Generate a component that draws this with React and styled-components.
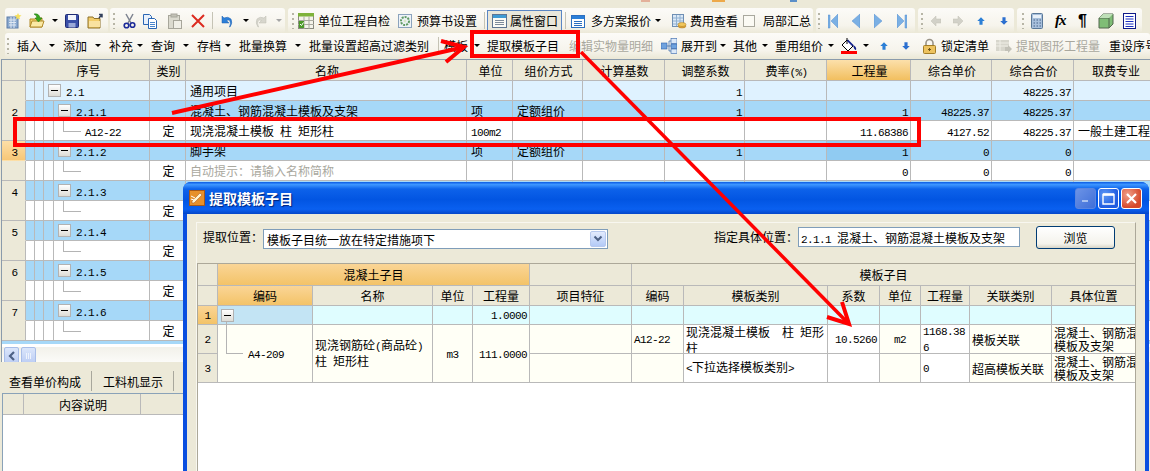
import React from 'react'
import styled, { createGlobalStyle } from 'styled-components'

const GlobalStyle = createGlobalStyle`
  html, body { margin: 0; padding: 0; background: #ece9d8; }
  body { font-family: "Noto Sans CJK SC", sans-serif; font-size: 12px; color: #000; }
`

const Page = styled.div`
  position: relative;
  width: 1150px;
  height: 471px;
  overflow: hidden;
  background: #ece9d8;
`

const Num = styled.span`
  font-family: "Liberation Mono", monospace;
  font-size: 11px;
  letter-spacing: -0.6px;
`

const TxtRun = styled.span`
  white-space: pre;
`

// latin runs get the mono face so they keep the half width of the cjk glyphs
const Txt = ({ children }) => (
  <TxtRun>
    {String(children)
      .split(/([\x20-\x7e]+)/)
      .filter(Boolean)
      .map((part, i) => (/^[\x20-\x7e]+$/.test(part) ? <Num key={i}>{part}</Num> : <span key={i}>{part}</span>))}
  </TxtRun>
)

/* ---------- toolbars ---------- */

const TopEdge = styled.div`
  display: flex;
  height: 3px;
`

const ClippedIcon = styled.i`
  width: ${(p) => p.$w}px;
  height: 2px;
  margin-left: ${(p) => p.$ml}px;
  background: ${(p) => p.$bg};
`

const ToolRow = styled.div`
  display: flex;
  height: ${(p) => p.$h}px;
  padding-top: ${(p) => p.$top}px;
  box-sizing: border-box;
`

const ToolGroup = styled.div`
  display: flex;
  flex: none;
  align-items: center;
  box-sizing: border-box;
  width: ${(p) => p.$w}px;
  margin-left: ${(p) => p.$ml}px;
  padding-left: ${(p) => p.$pl}px;
  border-radius: 3px;
  background: linear-gradient(#fcfbf8, #f6f4ec 70%, #ece9d8);
`

const Slot = styled.div`
  display: flex;
  flex: none;
  align-items: center;
  width: ${(p) => p.$w}px;
  white-space: nowrap;
  color: ${(p) => (p.$off ? '#a9a89e' : '#000')};
  font-size: 12px;
`

const Caret = styled.i`
  width: 0;
  height: 0;
  border-left: 3px solid transparent;
  border-right: 3px solid transparent;
  border-top: 3px solid ${(p) => (p.$off ? '#a5a5a5' : '#000')};
`

const Grip = styled.i`
  width: 2px;
  height: 16px;
  background: repeating-linear-gradient(#b7b5a6 0 2px, transparent 2px 5px);
`

const Sep = styled.i`
  width: 1px;
  height: 17px;
  background: #c5c3b5;
`

const Pressed = styled.div`
  display: flex;
  align-items: center;
  gap: 3px;
  box-sizing: border-box;
  width: 75px;
  height: 22px;
  padding-left: 3px;
  border: 1px solid #5a86c4;
  background: #e9e7db;
`

const Check = styled.i`
  width: 10px;
  height: 10px;
  border: 1px solid #a9a89e;
  background: #fbfaf4;
`

const PaintWrap = styled.div`
  display: flex;
  flex-direction: column;
  align-items: center;
  width: 16px;
`

const PaintBar = styled.i`
  width: 16px;
  height: 3px;
  margin-top: -1px;
  background: #f00;
`

const Svg = ({ children, w = 16, h = 16, vb = '0 0 16 16' }) => (
  <svg width={w} height={h} viewBox={vb} style={{ display: 'block', flex: 'none' }}>
    {children}
  </svg>
)

const upPath = 'M8 2 L14 8 L10.5 8 L10.5 14 L5.5 14 L5.5 8 L2 8 Z'
const downPath = 'M8 14 L14 8 L10.5 8 L10.5 2 L5.5 2 L5.5 8 L2 8 Z'

const icons = {
  new: (
    <Svg>
      <rect x="1" y="4" width="11" height="11" fill="#8aa9cf" stroke="#5c7da8" />
      <path d="M3 7h7M3 9.500h7M3 12h7M5 4v11M8 4v11" stroke="#dfe8f3" />
      <path d="M12 0l1 2 2.500 .5-2 1.500.5 2.500-2-1.200-2 1.200.5-2.500-2-1.500 2.500-.5z" fill="#f7e05c" />
    </Svg>
  ),
  open: (
    <Svg>
      <path d="M1 6h5l1-1h6v9H1z" fill="#f6d36c" stroke="#b08a2a" />
      <path d="M1 14l2-6h12l-2 6z" fill="#fbe9a4" stroke="#b08a2a" />
      <path d="M5 1q5-1 6 4h2l-3.500 4L6 5h2Q8 2.500 5 1z" fill="#37a51e" stroke="#1f7a10" strokeWidth=".5" />
    </Svg>
  ),
  save: (
    <Svg>
      <rect x="1.500" y="1.500" width="13" height="13" rx="1" fill="#3a4fa8" stroke="#1f2b74" />
      <rect x="4" y="2" width="8" height="5" fill="#f2f4fb" />
      <rect x="4.500" y="10" width="7" height="4.500" fill="#9aa8d8" />
    </Svg>
  ),
  folderUp: (
    <Svg>
      <path d="M1 4h5l1 1.500h6V15H1z" fill="#f3cd6a" stroke="#8d7128" />
      <path d="M2 8h11v6H2z" fill="#f9e2a0" />
      <path d="M12 5l3-3.500m-3 0h3v3" stroke="#33405c" strokeWidth="1.500" fill="none" />
    </Svg>
  ),
  cut: (
    <Svg>
      <path d="M4 1l5 9M11 1L6 10" stroke="#7d8390" strokeWidth="1.500" />
      <circle cx="4.500" cy="12.500" r="2.300" fill="none" stroke="#1c2a98" strokeWidth="1.600" />
      <circle cx="10.500" cy="12" r="2.300" fill="none" stroke="#1c2a98" strokeWidth="1.600" />
    </Svg>
  ),
  copy: (
    <Svg>
      <path d="M1.500 1.500h6l2 2v8h-8z" fill="#e8f0fb" stroke="#2a66b4" />
      <path d="M6.500 5.500h6l2 2v8h-8z" fill="#fff" stroke="#2a66b4" />
      <path d="M8 9.500h5M8 11.500h5M8 13.500h5" stroke="#4a86cc" />
    </Svg>
  ),
  paste: (
    <Svg>
      <rect x="1.500" y="2.500" width="11" height="13" fill="#dbdacf" stroke="#a7a69b" />
      <rect x="4" y="1" width="6" height="3" fill="#c2c1b6" stroke="#a7a69b" />
      <rect x="6.500" y="7.500" width="8" height="8" fill="#f0efe7" stroke="#a7a69b" />
    </Svg>
  ),
  del: (
    <Svg>
      <path d="M2 2l12 12M14 2L2 14" stroke="#dc2b20" strokeWidth="2" />
    </Svg>
  ),
  undo: (
    <Svg>
      <path d="M12 14q3-4 1-8-3-3-7-1L4 3v7h7L8.500 7.500q2.500-1 3.500.5 1 2-.5 6z" fill="#2c7fd8" stroke="#1c5fae" strokeWidth=".5" />
    </Svg>
  ),
  redo: (
    <Svg>
      <path d="M4 14q-3-4-1-8 3-3 7-1l2-2v7H5l2.500-2.500q-2.500-1-3.500.5-1 2 .5 6z" fill="#d7d6cd" stroke="#bdbcb2" strokeWidth=".5" />
    </Svg>
  ),
  check: (
    <Svg>
      <rect x=".500" y=".500" width="15" height="15" fill="#f4f3ea" stroke="#8a8a80" />
      <rect x="0" y="0" width="16" height="3.500" fill="#7fb33a" />
      <path d="M0 7.500h16M0 11.500h16M6 3.500V16M11 3.500V16" stroke="#a9a99f" />
      <rect x="1" y="8" width="5" height="7" fill="#4c9a2a" />
      <path d="M2 11l1.500 1.500L5.500 9.500" stroke="#fff" fill="none" />
    </Svg>
  ),
  gear: (
    <Svg>
      <rect x="1.500" y="1.500" width="13" height="13" fill="#eef3f8" stroke="#8ba3bd" />
      <circle cx="8" cy="8" r="4" fill="none" stroke="#5f9a62" strokeWidth="2" strokeDasharray="2 1" />
      <circle cx="8" cy="8" r="1.500" fill="#d9e8c8" />
    </Svg>
  ),
  props: (
    <Svg>
      <rect x="1.500" y="1.500" width="14" height="13" fill="#fbfbf6" stroke="#5e7592" />
      <rect x="2" y="2" width="13" height="3" fill="#3f9bd4" />
      <path d="M4 7.500h9M4 9.500h9M4 11.500h9" stroke="#7d8b9b" />
    </Svg>
  ),
  plan: (
    <Svg>
      <rect x="1.500" y="2.500" width="13" height="12" fill="#fff" stroke="#2c6fc0" />
      <rect x="2" y="3" width="12" height="3" fill="#2c7fd8" />
      <path d="M4 8.500h8M4 10.500h8M4 12.500h8" stroke="#2c6fc0" />
    </Svg>
  ),
  fee: (
    <Svg>
      <rect x="1.500" y="1.500" width="11" height="12" fill="#dce9f6" stroke="#6f8fb4" />
      <path d="M2 5h10M2 8h10M2 11h10M5.500 2v11M9 2v11" stroke="#8fb0d2" />
      <ellipse cx="11" cy="13" rx="4" ry="2" fill="#e1a83c" stroke="#a87820" strokeWidth=".5" />
      <ellipse cx="11" cy="11.500" rx="4" ry="2" fill="#f0c65c" stroke="#a87820" strokeWidth=".5" />
    </Svg>
  ),
  first: (
    <Svg w={10} vb="0 0 10 16">
      <path d="M0 2h2v13H0zM10 1v14L3 8z" fill="#7bb0e4" stroke="#5a93d2" strokeWidth=".5" />
    </Svg>
  ),
  prev: (
    <Svg w={8} vb="0 0 8 16">
      <path d="M8 1v14L0 8z" fill="#7bb0e4" stroke="#5a93d2" strokeWidth=".5" />
    </Svg>
  ),
  next: (
    <Svg w={8} vb="0 0 8 16">
      <path d="M0 1v14L8 8z" fill="#7bb0e4" stroke="#5a93d2" strokeWidth=".5" />
    </Svg>
  ),
  last: (
    <Svg w={10} vb="0 0 10 16">
      <path d="M8 2h2v13H8zM0 1v14L7 8z" fill="#7bb0e4" stroke="#5a93d2" strokeWidth=".5" />
    </Svg>
  ),
  left: (
    <Svg w={10} h={12} vb="0 0 10 12">
      <path d="M0 6l5-5v3h5v4H5v3z" fill="#d2d1c8" stroke="#c2c1b7" strokeWidth=".5" />
    </Svg>
  ),
  right: (
    <Svg w={10} h={12} vb="0 0 10 12">
      <path d="M10 6L5 1v3H0v4h5v3z" fill="#d2d1c8" stroke="#c2c1b7" strokeWidth=".5" />
    </Svg>
  ),
  up: (
    <Svg w={10} h={12}>
      <path d={upPath} fill="#2b7fd6" />
    </Svg>
  ),
  down: (
    <Svg w={10} h={12}>
      <path d={downPath} fill="#2b6fd0" />
    </Svg>
  ),
  tree: (
    <Svg>
      <rect x="0" y="5" width="6" height="6" fill="#6fa2de" stroke="#2f62a8" strokeWidth=".6" />
      <rect x="10" y="0.500" width="6" height="5" fill="#dbe8f8" stroke="#2f62a8" strokeWidth=".6" />
      <rect x="10" y="6" width="6" height="4.500" fill="#6fa2de" stroke="#2f62a8" strokeWidth=".6" />
      <rect x="10" y="11" width="6" height="4.500" fill="#dbe8f8" stroke="#2f62a8" strokeWidth=".6" />
      <path d="M6 8h4M8 3v10M8 3h2M8 13h2" stroke="#2f62a8" strokeWidth=".7" />
    </Svg>
  ),
  paint: (
    <Svg h={14} vb="0 0 16 14">
      <path d="M6 2l6 6-5 5-6-6z" fill="#fff" stroke="#000" />
      <path d="M6 0v6" stroke="#000" />
      <path d="M12 7q4 2 3 5-2 0-3-5z" fill="#12208c" />
      <path d="M7 1.500l5.500 5.500-1.500 1-5-5z" fill="#12208c" />
    </Svg>
  ),
  lock: (
    <Svg>
      <path d="M4 8V5a3.500 3.500 0 0 1 7 0v3" fill="none" stroke="#9a9488" strokeWidth="1.600" />
      <rect x="1.500" y="7.500" width="12" height="8" rx="1" fill="#edc35f" stroke="#a27d26" />
      <path d="M7.500 10v3M6 11.500h3" stroke="#6e5518" />
    </Svg>
  ),
  pick: (
    <Svg>
      <rect x="0" y="2" width="13" height="11" fill="#d7d6cc" />
      <path d="M0 5h13M0 8h13M4 2v11" stroke="#efeee6" />
      <path d="M9 9h3V7l4 4-4 4v-2H9z" fill="#c2c1b7" />
    </Svg>
  ),
  calc: (
    <Svg w={12} vb="0 0 12 16">
      <rect x=".500" y=".500" width="11" height="15" rx="1" fill="#a8c0dc" stroke="#5a7898" />
      <rect x="2" y="2" width="8" height="3" fill="#e8f0f8" />
      <path d="M2.500 7h1.500M5.500 7H7M8.500 7H10M2.500 10h1.500M5.500 10H7M8.500 10H10M2.500 13h1.500M5.500 13H7M8.500 13H10" stroke="#47628a" />
    </Svg>
  ),
  cube: (
    <Svg>
      <path d="M1 5l4-4h10v10l-4 4H1z" fill="#7fbd76" stroke="#52664e" />
      <path d="M1 5h10v10" fill="none" stroke="#52664e" />
      <path d="M1 5l4-4h10l-4 4z" fill="#bfe0b8" />
    </Svg>
  ),
  list: (
    <Svg w={13} vb="0 0 13 16">
      <rect x=".500" y=".500" width="12" height="15" fill="#fff" stroke="#101a88" />
      <path d="M2.500 3.500h8M2.500 6h8M2.500 8.500h8M2.500 11h8M2.500 13.500h8" stroke="#1c30c0" />
    </Svg>
  ),
}

const Fx = styled.span`
  font-family: "Liberation Serif", serif;
  font-style: italic;
  font-weight: 700;
  font-size: 15px;
  letter-spacing: -1px;
`

const Pilcrow = styled.span`
  font-family: "Liberation Sans", sans-serif;
  font-weight: 700;
  font-size: 16px;
`

const renderItem = (it) => {
  if (it.icon) return icons[it.icon]
  if (it.text) return <Txt>{it.text}</Txt>
  if (it.caret) return <Caret $off={it.off} />
  if (it.grip) return <Grip />
  if (it.sep) return <Sep />
  if (it.check) return <Check />
  if (it.fx) return <Fx>fx</Fx>
  if (it.pil) return <Pilcrow>¶</Pilcrow>
  if (it.paint)
    return (
      <PaintWrap>
        {icons.paint}
        <PaintBar />
      </PaintWrap>
    )
  if (it.pressed)
    return (
      <Pressed>
        {icons.props}
        <Txt>{it.pressed}</Txt>
      </Pressed>
    )
  return null
}

const Group = ({ from, to, ml, items }) => (
  <ToolGroup $w={to - from} $ml={ml} $pl={items[0].x - from}>
    {items.map((it, i) => (
      <Slot key={i} $off={it.off} $w={(items[i + 1] ? items[i + 1].x : to) - it.x}>
        {renderItem(it)}
      </Slot>
    ))}
  </ToolGroup>
)

const bar1 = [
  {
    from: 5, to: 108, ml: 5,
    items: [{ x: 6, icon: 'new' }, { x: 29, icon: 'open' }, { x: 52, caret: 1 }, { x: 64, icon: 'save' }, { x: 87, icon: 'folderUp' }],
  },
  {
    from: 110, to: 285, ml: 2,
    items: [
      { x: 113, grip: 1 }, { x: 122, icon: 'cut' }, { x: 142, icon: 'copy' }, { x: 167, icon: 'paste' }, { x: 190, icon: 'del' },
      { x: 212, sep: 1 }, { x: 218, icon: 'undo' }, { x: 243, caret: 1 }, { x: 254, icon: 'redo' }, { x: 276, caret: 1, off: 1 },
    ],
  },
  {
    from: 288, to: 813, ml: 3,
    items: [
      { x: 292, grip: 1 }, { x: 298, icon: 'check' }, { x: 318, text: '单位工程自检' }, { x: 397, icon: 'gear' }, { x: 417, text: '预算书设置' },
      { x: 484, sep: 1 }, { x: 487, pressed: '属性窗口' }, { x: 565, sep: 1 }, { x: 570, icon: 'plan' }, { x: 591, text: '多方案报价' },
      { x: 655, caret: 1 }, { x: 671, icon: 'fee' }, { x: 690, text: '费用查看' }, { x: 743, check: 1 }, { x: 763, text: '局部汇总' },
    ],
  },
  {
    from: 816, to: 915, ml: 3,
    items: [{ x: 818, grip: 1 }, { x: 828, icon: 'first' }, { x: 852, icon: 'prev' }, { x: 874, icon: 'next' }, { x: 897, icon: 'last' }],
  },
  {
    from: 918, to: 1014, ml: 3,
    items: [{ x: 921, grip: 1 }, { x: 931, icon: 'left' }, { x: 953, icon: 'right' }, { x: 976, icon: 'up' }, { x: 999, icon: 'down' }],
  },
  {
    from: 1017, to: 1142, ml: 3,
    items: [{ x: 1022, grip: 1 }, { x: 1031, icon: 'calc' }, { x: 1055, fx: 1 }, { x: 1078, pil: 1 }, { x: 1098, icon: 'cube' }, { x: 1123, icon: 'list' }],
  },
]

const bar2 = [
  {
    from: 5, to: 1150, ml: 5,
    items: [
      { x: 7, grip: 1 }, { x: 17, text: '插入' }, { x: 49, caret: 1 }, { x: 63, text: '添加' }, { x: 95, caret: 1 }, { x: 109, text: '补充' },
      { x: 137, caret: 1 }, { x: 151, text: '查询' }, { x: 183, caret: 1 }, { x: 197, text: '存档' }, { x: 225, caret: 1 },
      { x: 239, text: '批量换算' }, { x: 295, caret: 1 }, { x: 309, text: '批量设置超高过滤类别' }, { x: 438, sep: 1 },
      { x: 444, text: '模板' }, { x: 474, caret: 1 }, { x: 487, text: '提取模板子目' }, { x: 569, text: '编辑实物量明细', off: 1 },
      { x: 661, icon: 'tree' }, { x: 681, text: '展开到' }, { x: 720, caret: 1 }, { x: 733, text: '其他' }, { x: 762, caret: 1 },
      { x: 775, text: '重用组价' }, { x: 828, caret: 1 }, { x: 841, paint: 1 }, { x: 863, caret: 1 }, { x: 879, icon: 'up' },
      { x: 901, icon: 'down' }, { x: 922, icon: 'lock' }, { x: 941, text: '锁定清单' }, { x: 996, icon: 'pick' },
      { x: 1016, text: '提取图形工程量', off: 1 }, { x: 1109, text: '重设序号' },
    ],
  },
]

/* ---------- main grid ---------- */

const COLS = '24px 9px 9px 10px 96px 36px 281px 46px 70px 82px 80px 82px 84px 81px 82px 83px'
const ROW_BG = { group: '#dff2ff', parent: '#a6d8f8', child: '#fff' }

const Grid = styled.div`
  width: 1160px;
  height: 302px;
  margin: 1px 0 0 1px;
  border-left: 1px solid #8a9bab;
  border-top: 1px solid #8a9bab;
  overflow: hidden;
  background: #fff;
`

const Row = styled.div`
  display: grid;
  grid-template-columns: ${COLS};
  height: ${(p) => p.$h || 20}px;
`

const Cell = styled.div`
  display: flex;
  align-items: center;
  justify-content: ${(p) => p.$align || 'flex-start'};
  box-sizing: border-box;
  min-width: 0;
  padding: 0 2px 0 4px;
  grid-column: ${(p) => p.$span || 'auto'};
  white-space: nowrap;
  background: ${(p) => p.$bg || '#fff'};
  color: ${(p) => p.$color || '#000'};
  border-right: 1px solid #b9b9b9;
  border-bottom: 1px solid ${(p) => (p.$noLine ? 'transparent' : '#b9b9b9')};
`

const HeadCell = styled(Cell)`
  justify-content: center;
  background: ${(p) => (p.$hot ? 'linear-gradient(#fce0ab, #f2bf5f)' : '#ece9d8')};
`

const NumHead = styled(Cell)`
  justify-content: center;
  background: ${(p) => (p.$hot ? 'linear-gradient(#fddfa8, #f7c777)' : '#ece9d8')};
`

const TreeCell = styled(Cell)`
  gap: 5px;
  padding: 0 0 0 4px;
`

const ChildCell = styled(Cell)`
  align-items: flex-start;
  padding: 0 0 0 9px;
`

const Connector = styled.i`
  flex: none;
  width: 17px;
  height: 10px;
  margin-right: 4px;
  border-left: 1px solid #b4b4b4;
  border-bottom: 1px solid #b4b4b4;
`

const ChildCode = styled.span`
  margin-top: 1px;
`

const Box = styled.i`
  position: relative;
  flex: none;
  box-sizing: border-box;
  width: 13px;
  height: 13px;
  border: 1px solid #b2b2b2;
  background: linear-gradient(#fff, #dddcd6);
  &::after {
    content: '';
    position: absolute;
    left: 2px;
    top: 5px;
    width: 7px;
    height: 1px;
    background: #000;
  }
`

const rows = [
  { kind: 'group', code: '2.1', name: '通用项目', adj: '1', total: '48225.37' },
  { kind: 'parent', num: '2', code: '2.1.1', name: '混凝土、钢筋混凝土模板及支架', unit: '项', way: '定额组价', adj: '1', qty: '1', price: '48225.37', total: '48225.37' },
  { kind: 'child', code: 'A12-22', type: '定', name: '现浇混凝土模板 柱 矩形柱', unit: '100m2', qty: '11.68386', price: '4127.52', total: '48225.37', major: '一般土建工程' },
  { kind: 'parent', num: '3', hot: true, code: '2.1.2', name: '脚手架', unit: '项', way: '定额组价', adj: '1', qty: '1', price: '0', total: '0', qtyBg: '#90cbf2' },
  { kind: 'child', type: '定', name: '自动提示：请输入名称简称', hint: true, qty: '0', price: '0', total: '0' },
  { kind: 'parent', num: '4', code: '2.1.3' },
  { kind: 'child', type: '定' },
  { kind: 'parent', num: '5', code: '2.1.4' },
  { kind: 'child', type: '定' },
  { kind: 'parent', num: '6', code: '2.1.5' },
  { kind: 'child', type: '定' },
  { kind: 'parent', num: '7', code: '2.1.6' },
  { kind: 'child', type: '定' },
]

const headers = ['类别', '名称', '单位', '组价方式', '计算基数', '调整系数', '费率(%)', '工程量', '综合单价', '综合合价', '取费专业']

const GridRow = ({ r }) => {
  const bg = ROW_BG[r.kind]
  const end = 'flex-end'
  return (
    <Row>
      <NumHead $hot={r.hot} $noLine={r.kind === 'parent' || r.kind === 'group'}>
        {r.num && <Txt>{r.num}</Txt>}
      </NumHead>
      <Cell $bg={bg} />
      <Cell $bg={bg} />
      {r.kind === 'group' ? (
        <TreeCell $bg={bg} $span="span 2">
          <Box />
          <Txt>{r.code}</Txt>
        </TreeCell>
      ) : (
        <>
          <Cell $bg={bg} />
          {r.kind === 'parent' ? (
            <TreeCell $bg={bg}>
              <Box />
              <Txt>{r.code}</Txt>
            </TreeCell>
          ) : (
            <ChildCell $bg={bg}>
              <Connector />
              {r.code && <ChildCode><Txt>{r.code}</Txt></ChildCode>}
            </ChildCell>
          )}
        </>
      )}
      <Cell $bg={bg} $align="center">{r.type}</Cell>
      <Cell $bg={bg} $color={r.hint ? '#a9a89e' : undefined}>{r.name && <Txt>{r.name}</Txt>}</Cell>
      <Cell $bg={bg}>{r.unit && <Txt>{r.unit}</Txt>}</Cell>
      <Cell $bg={bg}>{r.way}</Cell>
      <Cell $bg={bg} />
      <Cell $bg={bg} $align={end}>{r.adj && <Txt>{r.adj}</Txt>}</Cell>
      <Cell $bg={bg} />
      <Cell $bg={r.qtyBg || bg} $align={end}>{r.qty && <Txt>{r.qty}</Txt>}</Cell>
      <Cell $bg={bg} $align={end}>{r.price && <Txt>{r.price}</Txt>}</Cell>
      <Cell $bg={bg} $align={end}>{r.total && <Txt>{r.total}</Txt>}</Cell>
      <Cell $bg={bg}>{r.major}</Cell>
    </Row>
  )
}

const Scrollbar = styled.div`
  display: flex;
  gap: 2px;
  height: 18px;
  margin-top: 3px;
  padding-left: 2px;
  background: linear-gradient(#f2f1ea, #fdfdfb);
`

const ScrollBtn = styled.div`
  display: flex;
  align-items: center;
  justify-content: center;
  box-sizing: border-box;
  width: 15px;
  height: 17px;
  border: 1px solid #a8bde8;
  border-radius: 2px;
  background: linear-gradient(#dbe6fb, #bccdf4);
`

const ParentSliver = styled.div`
  height: 3px;
  background: #a6d8f8;
`

const Tabs = styled.div`
  display: flex;
  align-items: center;
  height: 24px;
  margin-top: 7px;
  padding-left: 9px;
`

const Tab = styled.div`
  display: flex;
  align-items: center;
  height: 20px;
  padding-right: 10px;
  margin-right: 11px;
  border-right: 1px solid #a8a79c;
  white-space: nowrap;
`

const Lower = styled.div`
  width: 190px;
  height: 90px;
  margin: 0 0 0 2px;
  border-left: 1px solid #8aa2b8;
  border-top: 1px solid #8aa2b8;
  background: #fff;
`

const LowerHead = styled.div`
  display: grid;
  grid-template-columns: 21px 117px 1fr;
  height: 21px;
`

/* ---------- dialog ---------- */

const Dialog = styled.div`
  position: absolute;
  left: 183px;
  top: 182px;
  width: 966px;
  height: 320px;
  border-radius: 8px 8px 0 0;
  background: #0a4fe0;
  box-sizing: border-box;
  padding: 0 4px;
`

const TitleBar = styled.div`
  display: flex;
  align-items: center;
  height: 32px;
  margin: 0 -4px;
  padding: 0 7px 0 6px;
  border-radius: 8px 8px 0 0;
  background: linear-gradient(#0a5ae4 0, #3d96ff 8%, #0d62ea 22%, #0255e2 55%, #0a60f0 85%, #0345c8 100%);
`

const TitleIcon = styled.div`
  flex: none;
  width: 16px;
  height: 16px;
  margin-right: 4px;
`

const TitleText = styled.div`
  flex: 1;
  color: #fff;
  font-weight: 700;
  font-size: 14px;
  text-shadow: 1px 1px 1px #00237a;
`

const WinBtn = styled.div`
  display: flex;
  align-items: center;
  justify-content: center;
  box-sizing: border-box;
  width: 21px;
  height: 21px;
  margin-left: ${(p) => p.$ml || 0}px;
  border: 1px solid ${(p) => (p.$off ? '#5b86e0' : '#fff')};
  border-radius: 3px;
  background: ${(p) =>
    p.$close
      ? 'radial-gradient(circle at 30% 30%, #f0a08a, #d5482a 70%)'
      : p.$off
      ? 'linear-gradient(135deg, #6c93e6, #3f6fd8)'
      : 'radial-gradient(circle at 30% 30%, #5d98f5, #1f5be0 70%)'};
`

const DialogBody = styled.div`
  height: 100%;
  box-sizing: border-box;
  padding: 8px 9px;
  background: #ece9d8;
`

const Panel = styled.div`
  height: 300px;
  border: 1px solid #f8f7f0;
  border-right-color: #aca899;
`

const FormRow = styled.div`
  display: flex;
  align-items: center;
  box-sizing: border-box;
  height: 40px;
  padding: 0 0 8px 6px;
`

const Label = styled.span`
  white-space: nowrap;
  margin-left: ${(p) => p.$ml || 0}px;
  margin-bottom: 6px;
`

const Combo = styled.div`
  display: flex;
  align-items: center;
  justify-content: space-between;
  box-sizing: border-box;
  width: 345px;
  height: 20px;
  padding: 0 1px 0 3px;
  border: 1px solid #7f9db9;
  background: #fff;
`

const ComboBtn = styled.div`
  display: flex;
  align-items: center;
  justify-content: center;
  box-sizing: border-box;
  width: 16px;
  height: 16px;
  border: 1px solid #b7c9ee;
  border-radius: 2px;
  background: linear-gradient(#e3ebfd, #b3caf7);
`

const Input = styled.div`
  box-sizing: border-box;
  width: 222px;
  height: 20px;
  margin: 0 0 4px 0;
  padding: 2px 2px;
  line-height: 15px;
  border: 1px solid #7f9db9;
  background: #fff;
  white-space: nowrap;
`

const Button = styled.div`
  display: flex;
  align-items: center;
  justify-content: center;
  box-sizing: border-box;
  width: 79px;
  height: 23px;
  margin: 0 0 4px 16px;
  border: 1px solid #003c74;
  border-radius: 3px;
  background: linear-gradient(#fff, #f4f3ec 80%, #d8d5c6);
`

const SubGrid = styled.div`
  display: grid;
  grid-template-columns: 20px 95px 120px 40px 57px 102px 52px 144px 52px 41px 49px 82px 84px;
  grid-template-rows: 22px 20px 19px 29px 29px;
  align-content: start;
  height: 240px;
  border-top: 1px solid #aca899;
  border-left: 1px solid #aca899;
  background: #fff;
  overflow: hidden;
`

const SubCell = styled.div`
  display: flex;
  align-items: center;
  justify-content: ${(p) => p.$align || 'flex-start'};
  box-sizing: border-box;
  min-width: 0;
  padding: 0 2px;
  grid-column: ${(p) => p.$col || 'auto'};
  grid-row: ${(p) => p.$row || 'auto'};
  line-height: 13px;
  white-space: nowrap;
  overflow: hidden;
  background: ${(p) => p.$bg || '#fffff6'};
  border-right: 1px solid #b9b9b9;
  border-bottom: 1px solid #b9b9b9;
`

const HOT = 'linear-gradient(#fad596, #f3c368)'
const BEIGE = '#ece9d8'
const AQUA = '#dffdff'

const SubRoot = styled(SubCell)`
  position: relative;
  padding-left: 3px;
  overflow: visible;
`

const SubStem = styled.i`
  position: absolute;
  left: 8px;
  top: -3px;
  width: 16px;
  height: 31px;
  border-left: 1px solid #b4b4b4;
  border-bottom: 1px solid #b4b4b4;
`

const SubCode = styled.span`
  padding-left: 27px;
`

const subHeads = [
  ['编码', HOT], ['名称'], ['单位'], ['工程量'], ['项目特征'], ['编码'], ['模板类别'], ['系数'], ['单位'], ['工程量'], ['关联类别'], ['具体位置'],
]

const Annot = styled.svg`
  position: absolute;
  left: 0;
  top: 0;
  pointer-events: none;
`

const TemplateDialog = () => (
  <Dialog>
    <TitleBar>
      <TitleIcon>
        <Svg>
          <rect x=".500" y=".500" width="15" height="15" fill="#e7902a" stroke="#a5581a" />
          <path d="M3 11l8-8 2 2-8 8H3z" fill="#fff2cc" stroke="#b3602a" strokeWidth=".6" />
          <path d="M2 6l4 2M2 9l3 1" stroke="#fff" />
        </Svg>
      </TitleIcon>
      <TitleText>提取模板子目</TitleText>
      <WinBtn $off>
        <Svg w={10} h={10} vb="0 0 10 10"><rect x="1" y="7" width="6" height="2" fill="#a9c2f0" /></Svg>
      </WinBtn>
      <WinBtn $ml={2}>
        <Svg w={13} h={13} vb="0 0 13 13"><path d="M1 2.500h11v9.500H1z" fill="none" stroke="#fff" strokeWidth="1.400" /><path d="M1 2.500h11" stroke="#fff" strokeWidth="2.500" /></Svg>
      </WinBtn>
      <WinBtn $ml={2} $close>
        <Svg w={13} h={13} vb="0 0 13 13"><path d="M2 2l9 9M11 2l-9 9" stroke="#fff" strokeWidth="2.200" /></Svg>
      </WinBtn>
    </TitleBar>
    <DialogBody>
      <Panel>
        <FormRow>
          <Label>提取位置：</Label>
          <Combo>
            <Txt>模板子目统一放在特定措施项下</Txt>
            <ComboBtn>
              <Svg w={10} h={8} vb="0 0 10 8"><path d="M1.500 1.500L5 5l3.500-3.500" fill="none" stroke="#4d6185" strokeWidth="2" /></Svg>
            </ComboBtn>
          </Combo>
          <Label $ml={106}>指定具体位置：</Label>
          <Input><Txt>2.1.1 混凝土、钢筋混凝土模板及支架</Txt></Input>
          <Button>浏览</Button>
        </FormRow>
        <SubGrid>
          <SubCell $bg={BEIGE} />
          <SubCell $bg={HOT} $col="span 4" $align="center">混凝土子目</SubCell>
          <SubCell $bg={BEIGE} />
          <SubCell $bg={BEIGE} $col="span 7" $align="center">模板子目</SubCell>

          <SubCell $bg={BEIGE} />
          {subHeads.map(([t, bg], i) => (
            <SubCell key={i} $bg={bg || BEIGE} $align="center">{t}</SubCell>
          ))}

          <SubCell $bg={HOT} $align="center"><Txt>1</Txt></SubCell>
          <SubRoot $bg="#c3e4f4"><Box /></SubRoot>
          <SubCell $bg={AQUA} />
          <SubCell $bg={AQUA} />
          <SubCell $bg={AQUA} $align="flex-end"><Txt>1.0000</Txt></SubCell>
          {Array.from({ length: 8 }, (_, i) => <SubCell key={i} $bg={AQUA} />)}

          <SubCell $bg={BEIGE} $align="center"><Txt>2</Txt></SubCell>
          <SubRoot $row="span 2">
            <SubStem />
            <SubCode><Txt>A4-209</Txt></SubCode>
          </SubRoot>
          <SubCell $row="span 2"><div><Txt>现浇钢筋砼(商品砼)</Txt><br /><Txt>柱 矩形柱</Txt></div></SubCell>
          <SubCell $row="span 2" $align="center"><Txt>m3</Txt></SubCell>
          <SubCell $row="span 2" $align="flex-end"><Txt>111.0000</Txt></SubCell>
          <SubCell />
          <SubCell><Txt>A12-22</Txt></SubCell>
          <SubCell $bg="#fff"><div><Txt>现浇混凝土模板  柱 矩形</Txt><br /><Txt>柱</Txt></div></SubCell>
          <SubCell $bg="#fff" $align="flex-end"><Txt>10.5260</Txt></SubCell>
          <SubCell $align="center"><Txt>m2</Txt></SubCell>
          <SubCell $bg="#fff"><div><Txt>1168.38</Txt><br /><Txt>6</Txt></div></SubCell>
          <SubCell>模板关联</SubCell>
          <SubCell><div>混凝土、钢筋混<br />模板及支架</div></SubCell>

          <SubCell $bg={BEIGE} $align="center"><Txt>3</Txt></SubCell>
          <SubCell />
          <SubCell />
          <SubCell $bg="#fff"><Txt>{'<下拉选择模板类别>'}</Txt></SubCell>
          <SubCell $bg="#fff" />
          <SubCell />
          <SubCell $bg="#fff"><Txt>0</Txt></SubCell>
          <SubCell>超高模板关联</SubCell>
          <SubCell><div>混凝土、钢筋混<br />模板及支架</div></SubCell>
        </SubGrid>
      </Panel>
    </DialogBody>
  </Dialog>
)

export default function App() {
  return (
    <Page>
      <GlobalStyle />
      <TopEdge>
        <ClippedIcon $ml={641} $w={9} $bg="#e3b09a" />
        <ClippedIcon $ml={62} $w={13} $bg="#eda94a" />
        <ClippedIcon $ml={65} $w={7} $bg="#5b8fc8" />
      </TopEdge>
      <ToolRow $h={30} $top={5}>
        {bar1.map((g, i) => <Group key={i} {...g} />)}
      </ToolRow>
      <ToolRow $h={25} $top={0}>
        {bar2.map((g, i) => <Group key={i} {...g} />)}
      </ToolRow>
      <Grid>
        <Row $h={21}>
          <HeadCell />
          <HeadCell $span="span 4">序号</HeadCell>
          {headers.map((h) => (
            <HeadCell key={h} $hot={h === '工程量'}><Txt>{h}</Txt></HeadCell>
          ))}
        </Row>
        {rows.map((r, i) => <GridRow key={i} r={r} />)}
        <ParentSliver />
        <Scrollbar>
          <ScrollBtn>
            <Svg w={8} h={10} vb="0 0 8 10"><path d="M6 1L2 5l4 4" fill="none" stroke="#4d6185" strokeWidth="2.200" /></Svg>
          </ScrollBtn>
          <ScrollBtn>
            <Svg w={8} h={8} vb="0 0 8 8"><path d="M1.500 1v6M3.500 1v6M5.500 1v6" stroke="#eef3fd" /></Svg>
          </ScrollBtn>
        </Scrollbar>
      </Grid>
      <Tabs>
        <Tab>查看单价构成</Tab>
        <Tab>工料机显示</Tab>
      </Tabs>
      <Lower>
        <LowerHead>
          <HeadCell />
          <HeadCell>内容说明</HeadCell>
          <HeadCell />
        </LowerHead>
      </Lower>
      <TemplateDialog />
      <Annot width="1150" height="471" viewBox="0 0 1150 471">
        <g fill="none" stroke="#f00" strokeWidth="4">
          <rect x="472" y="32" width="106" height="24" />
          <rect x="15" y="119" width="904" height="26" />
          <path d="M172 113L460 48" />
          <path d="M441 41L464 47L446 62" />
          <path d="M581 52L848 323" strokeWidth="3.500" />
          <path d="M827 317L849 324L842 302" />
        </g>
      </Annot>
    </Page>
  )
}
